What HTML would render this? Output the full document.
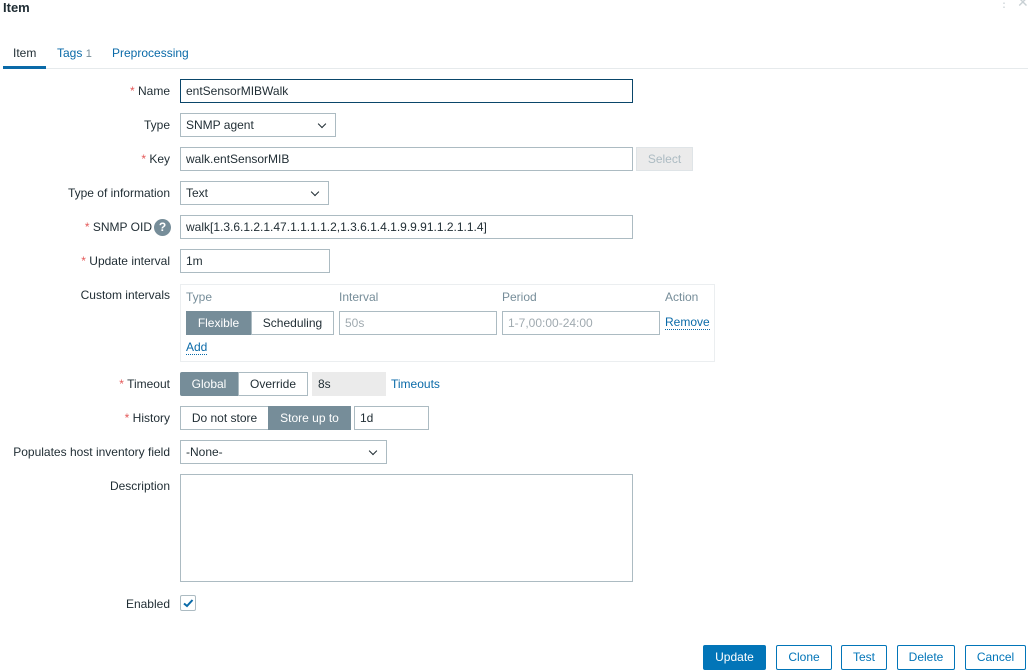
<!DOCTYPE html>
<html><head><meta charset="utf-8"><style>
*{box-sizing:border-box;margin:0;padding:0}
body{width:1031px;height:671px;background:#fff;font-family:"Liberation Sans",Arial,sans-serif;font-size:12px;color:#1f2c33;position:relative;overflow:hidden}
.a{position:absolute}
.lbl{position:absolute;right:861px;white-space:nowrap;line-height:14px}
.req{color:#e45959}
.in{position:absolute;border:1px solid #acbbc2;background:#fff;height:24px;line-height:22px;padding-left:5px;white-space:nowrap;overflow:hidden}
.sel::after{content:"";position:absolute;right:10px;top:7px;width:5px;height:5px;border-right:1.6px solid #1f2c33;border-bottom:1.6px solid #1f2c33;transform:rotate(45deg)}
.seg{position:absolute;height:24px;line-height:22px;text-align:center;border:1px solid #acbbc2;background:#fff}
.on{background:#768d99;color:#fff;border-color:#768d99}
.link{color:#0a6aa8}
.btn{position:absolute;top:645px;height:25px;line-height:23px;text-align:center;border:1px solid #0275b8;color:#0275b8;border-radius:2px;font-size:12px}
</style></head><body>
<div class="a" style="left:3px;top:0;font-weight:bold;font-size:13px;color:#1f2c33">Item</div>
<div class="a" style="left:998px;top:-4px;color:#c8d0d4;font-size:12px">⋮</div>
<div class="a" style="left:1017px;top:-6px;color:#c8d0d4;font-size:14px">✕</div>
<div class="a" style="left:13px;top:46px">Item</div>
<div class="a link" style="left:57px;top:46px">Tags <span style="color:#768d99;font-size:11px">1</span></div>
<div class="a link" style="left:112px;top:46px">Preprocessing</div>
<div class="a" style="left:3px;top:68px;width:1025px;height:1px;background:#e6eaec"></div>
<div class="a" style="left:3px;top:66px;width:43px;height:3px;background:#0a6aa8"></div>

<div class="lbl" style="top:84px"><span class="req">*</span> Name</div>
<div class="in" style="left:180px;top:79px;width:453px;border-color:#0a466a">entSensorMIBWalk</div>
<div class="lbl" style="top:118px">Type</div>
<div class="in sel" style="left:180px;top:113px;width:156px">SNMP agent</div>
<div class="lbl" style="top:152px"><span class="req">*</span> Key</div>
<div class="in" style="left:180px;top:147px;width:453px">walk.entSensorMIB</div>
<div class="in" style="left:636px;top:147px;width:57px;background:#ebebeb;color:#acbbc2;text-align:center;padding:0;border-color:#dfe4e7">Select</div>
<div class="lbl" style="top:186px">Type of information</div>
<div class="in sel" style="left:180px;top:181px;width:149px">Text</div>
<div class="lbl" style="top:220px;right:879px"><span class="req">*</span> SNMP OID</div>
<div class="a" style="left:154px;top:219px;width:17px;height:17px;border-radius:50%;background:#768d99;color:#fff;font-weight:bold;text-align:center;line-height:17px;font-size:12px">?</div>
<div class="in" style="left:180px;top:215px;width:453px">walk[1.3.6.1.2.1.47.1.1.1.1.2,1.3.6.1.4.1.9.9.91.1.2.1.1.4]</div>
<div class="lbl" style="top:254px"><span class="req">*</span> Update interval</div>
<div class="in" style="left:180px;top:249px;width:150px">1m</div>
<div class="lbl" style="top:288px">Custom intervals</div>
<div class="a" style="left:180px;top:284px;width:535px;height:78px;border:1px solid #ebeef0"></div>
<div class="a" style="left:186px;top:290px;color:#768d99">Type</div>
<div class="a" style="left:339px;top:290px;color:#768d99">Interval</div>
<div class="a" style="left:502px;top:290px;color:#768d99">Period</div>
<div class="a" style="left:665px;top:290px;color:#768d99">Action</div>
<div class="seg on" style="left:186px;top:311px;width:65px">Flexible</div>
<div class="seg" style="left:251px;top:311px;width:83px">Scheduling</div>
<div class="in" style="left:339px;top:311px;width:158px;color:#a0aab0">50s</div>
<div class="in" style="left:502px;top:311px;width:158px;color:#a0aab0">1-7,00:00-24:00</div>
<div class="a link" style="left:665px;top:316px;border-bottom:1px dotted #0a6aa8;line-height:13px">Remove</div>
<div class="a link" style="left:186px;top:341px;border-bottom:1px dotted #0a6aa8;line-height:13px">Add</div>
<div class="lbl" style="top:377px"><span class="req">*</span> Timeout</div>
<div class="seg on" style="left:180px;top:372px;width:58px;border-radius:2px 0 0 2px">Global</div>
<div class="seg" style="left:238px;top:372px;width:70px">Override</div>
<div class="in" style="left:312px;top:372px;width:74px;background:#ebebeb;border-color:#ebebeb">8s</div>
<div class="a link" style="left:391px;top:377px">Timeouts</div>
<div class="lbl" style="top:411px"><span class="req">*</span> History</div>
<div class="seg" style="left:180px;top:406px;width:89px">Do not store</div>
<div class="seg on" style="left:268px;top:406px;width:83px">Store up to</div>
<div class="in" style="left:354px;top:406px;width:75px">1d</div>
<div class="lbl" style="top:445px">Populates host inventory field</div>
<div class="in sel" style="left:180px;top:440px;width:207px">-None-</div>
<div class="lbl" style="top:479px">Description</div>
<div class="in" style="left:180px;top:474px;width:453px;height:108px"></div>
<div class="lbl" style="top:597px">Enabled</div>
<div class="a" style="left:180px;top:595px;width:16px;height:16px;border:1px solid #acbbc2;border-radius:2px"><svg width="14" height="14" viewBox="0 0 14 14"><path d="M3 7.5L6 10L11.5 4" stroke="#0a6aa8" stroke-width="2" fill="none"/></svg></div>
<div class="btn" style="left:703px;width:63px;background:#0275b8;color:#fff">Update</div>
<div class="btn" style="left:776px;width:56px">Clone</div>
<div class="btn" style="left:841px;width:46px">Test</div>
<div class="btn" style="left:897px;width:58px">Delete</div>
<div class="btn" style="left:965px;width:61px">Cancel</div>
</body></html>
